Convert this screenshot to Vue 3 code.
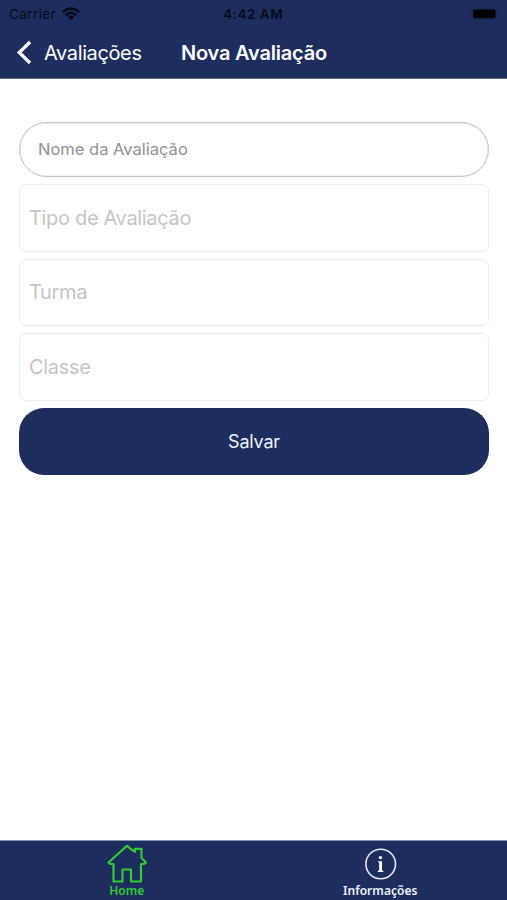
<script setup>
const selects = ['Tipo de Avaliação', 'Turma', 'Classe']
</script>

<template>
  <div class="screen">
    <header class="header">
      <div class="status">
        <div class="carrier">
          <span>Carrier</span>
          <svg class="wifi" viewBox="0 0 18 14" width="18" height="14">
            <g fill="none" stroke="#050a16" stroke-width="2.5">
              <path d="M.9 5.2Q9-2.3 17.1 5.2" />
              <path d="M3.8 8.3Q9 3.3 14.2 8.3" />
            </g>
            <path d="M5.9 10Q9 7.1 12.1 10L9 13.2Z" fill="#050a16" />
          </svg>
        </div>
        <span class="clock">4:42 AM</span>
        <svg class="battery" viewBox="0 0 32 14" width="32" height="14">
          <rect x=".7" y="1" width="27" height="11.5" rx="3" fill="none" stroke="#182650" />
          <rect x="3" y="2.5" width="22.5" height="8.7" rx="1.5" fill="#000" />
          <path d="M29 4.8Q31.5 6.7 29 8.7Z" fill="#182650" />
        </svg>
      </div>
      <nav class="nav">
        <button class="back">
          <svg viewBox="0 0 16 26" width="16" height="26">
            <path d="M14 2L3.3 12.5L14 23" fill="none" stroke="#fff" stroke-width="3.3" />
          </svg>
          <span>Avaliações</span>
        </button>
        <h1 class="title">Nova Avaliação</h1>
      </nav>
    </header>

    <main class="form">
      <input class="name" type="text" placeholder="Nome da Avaliação" />
      <div v-for="label in selects" :key="label" class="select"><span>{{ label }}</span></div>
      <button class="save"><span>Salvar</span></button>
    </main>

    <footer class="tabs">
      <div class="tab home">
        <svg viewBox="0 0 40 40" width="40" height="40">
          <path d="M20 1.8L1.5 18.5L3.5 20H6.5V37.5H15.5V25.5H24V37.5H34V20H36.8L39 18.5L34.5 14V4.8H28V7.8L25 5.8Z" fill="none" stroke="#32c936" stroke-width="2.2" stroke-linejoin="round" />
        </svg>
        <span>Home</span>
      </div>
      <div class="tab info">
        <svg viewBox="0 0 40 40" width="40" height="40">
          <circle cx="20.7" cy="20" r="14.8" fill="none" stroke="#e4ebf9" stroke-width="1.6" />
          <circle cx="20.4" cy="13.6" r="1.7" fill="#fff" />
          <path d="M18 17.2H22V26.3L23.4 27V28H17.8V27L19.2 26.3V18.5L18 18Z" fill="#fff" />
        </svg>
        <span>Informações</span>
      </div>
    </footer>
  </div>
</template>

<style>
body {
  margin: 0;
  background: #fff;
}
</style>

<style scoped>
.screen {
  width: 507px;
  height: 900px;
  display: flex;
  flex-direction: column;
  background: #fff;
  font-family: Inter, "Liberation Sans", sans-serif;
  overflow: hidden;
}
button {
  border: 0;
  padding: 0;
  font-family: inherit;
}
.header {
  height: 79px;
  box-sizing: border-box;
  flex: none;
  background: #1d2e5e;
  border-bottom: 1px solid #526a91;
}
.status {
  height: 27px;
  padding: 0 5px 0 9px;
  display: grid;
  grid-template-columns: 214px 1fr auto;
  align-items: center;
  color: #050a16;
  font-size: 13.5px;
}
.carrier {
  display: flex;
  align-items: center;
  gap: 6px;
  letter-spacing: 0.4px;
}
.clock {
  font-weight: 600;
  font-size: 13.5px;
  letter-spacing: 0.55px;
}
.nav {
  display: flex;
  align-items: center;
  height: 51px;
  padding-left: 16px;
  color: #fff;
}
.back {
  width: 165px;
  display: flex;
  align-items: center;
  gap: 12px;
  background: transparent;
  color: #fff;
  font-size: 20px;
  letter-spacing: -0.38px;
  text-align: left;
}
.title {
  margin: 0;
  font-size: 20px;
  font-weight: 600;
  letter-spacing: -0.2px;
}
.form {
  flex: 1;
  padding: 43px 18px 0 19px;
  display: flex;
  flex-direction: column;
  gap: 7px;
}
.name {
  height: 55px;
  box-sizing: border-box;
  border: 1px solid #c6c6c6;
  box-shadow: inset 0 0 0 0.5px #dedede;
  border-radius: 27.5px;
  padding: 0 18px 2px;
  font: 16.5px Inter, "Liberation Sans", sans-serif;
  outline: none;
  background: #fff;
}
.name::placeholder {
  color: #929292;
  opacity: 1;
}
.select {
  height: 67.5px;
  box-sizing: border-box;
  border: 1px solid #ececec;
  border-radius: 7px;
  padding-left: 9px;
  display: flex;
  align-items: center;
  color: #c5c5c7;
  font-size: 20px;
  letter-spacing: -0.33px;
}
.save {
  height: 67px;
  border-radius: 25px;
  background: #1d2e5e;
  color: #eef4ff;
  font-size: 18px;
  letter-spacing: -0.2px;
}
.tabs {
  height: 60px;
  box-sizing: border-box;
  border-top: 1px solid #8291ac;
  background: #1d2e5e;
  display: flex;
}
.tab {
  flex: 1;
  display: flex;
  flex-direction: column;
  align-items: center;
  padding-top: 3px;
  font: 600 12px/14px "Noto Sans", sans-serif;
  color: #eef3ff;
}
.info {
  letter-spacing: 0.05px;
}
.home {
  color: #32c936;
}
</style>
